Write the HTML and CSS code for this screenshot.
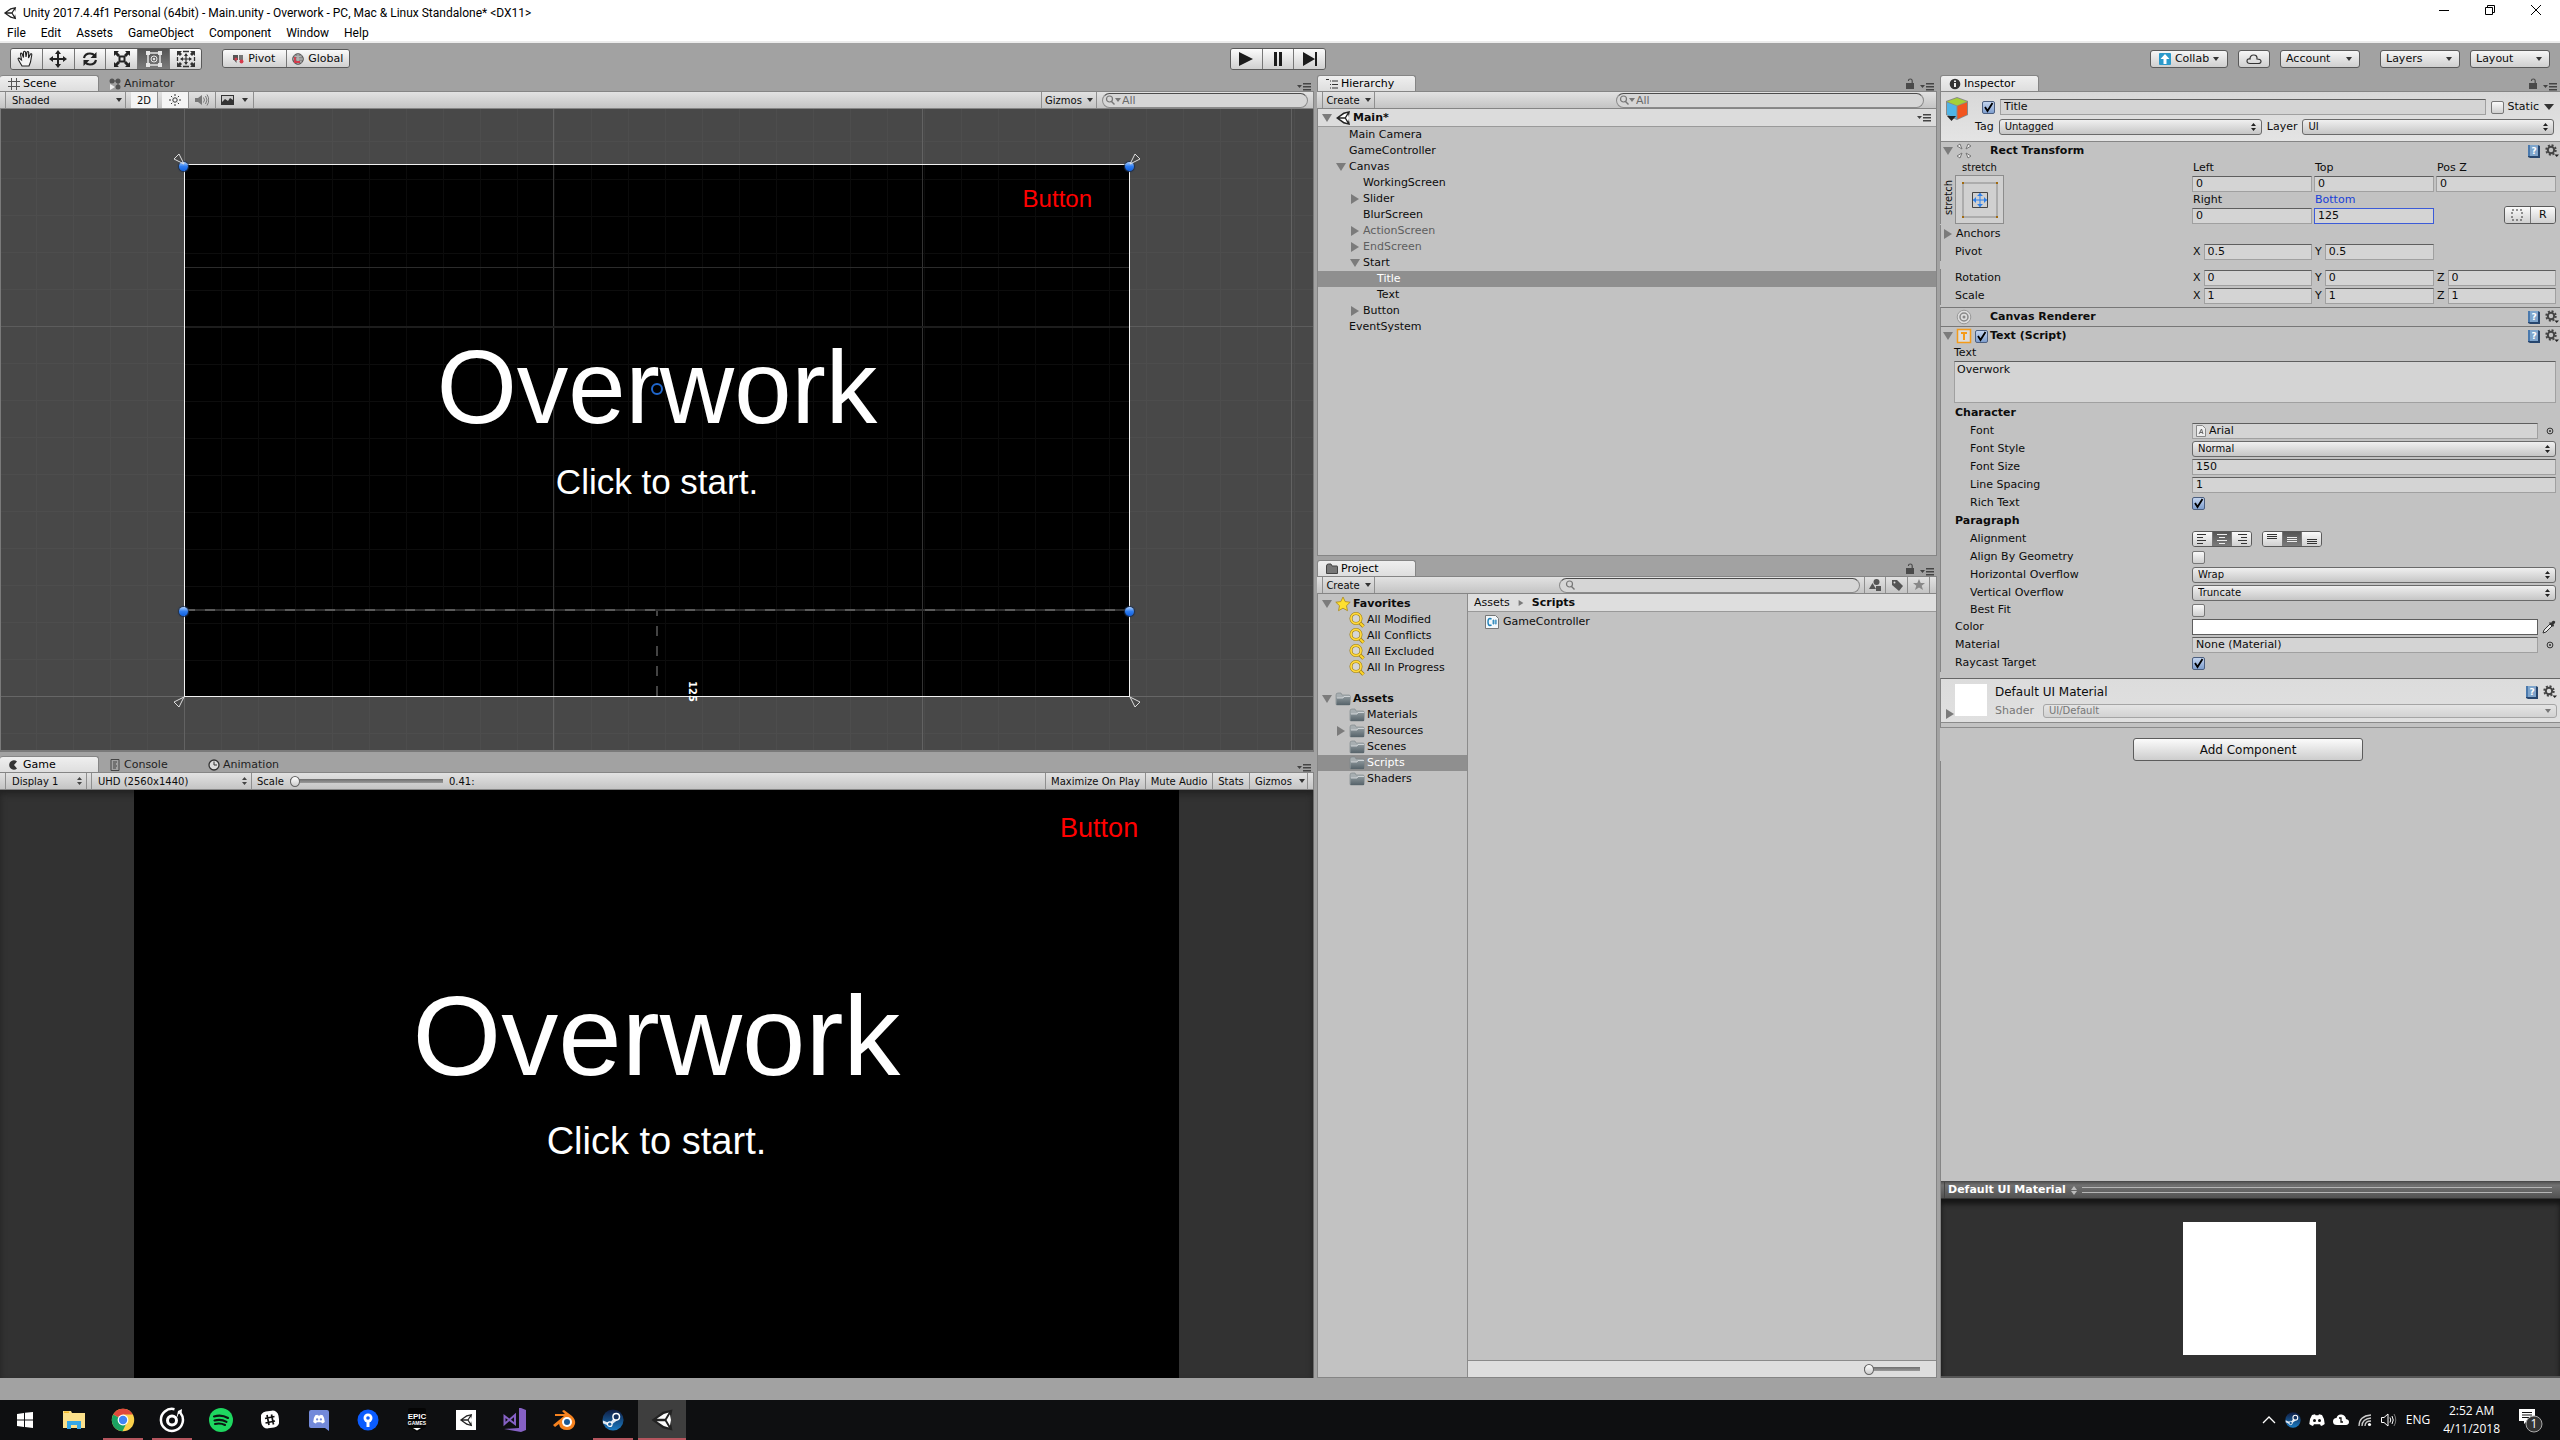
FILE: index.html
```
<!DOCTYPE html>
<html lang="en">
<head>
<meta charset="utf-8">
<title>Unity 2017.4.4f1 Personal (64bit) - Main.unity - Overwork</title>
<link rel="stylesheet" href="styles.css">
</head>
<body>
<svg class="defs" aria-hidden="true">
  <defs>
    <linearGradient id="g-folder" x1="0" y1="0" x2="0" y2="1"><stop offset="0" stop-color="#8d979b"/><stop offset="1" stop-color="#56636a"/></linearGradient>
    <linearGradient id="g-steam" x1="0" y1="0" x2="0" y2="1"><stop offset="0" stop-color="#0f1c42"/><stop offset="1" stop-color="#1b7cc4"/></linearGradient>
    <symbol id="unity" viewBox="0 0 16 16"><path d="M15 1 8.5 2.5 1 8l7.500 5.500L15 15l-1.500-7z" fill="#222"/><path d="m12.500 3-2.500 4.200h-5.500L9.200 4zM4.500 8.800H10l2.500 4.200-3.300-1zM13.300 4.200l.7 3.800-.7 3.800L11 8z" fill="#fff"/></symbol>
    <symbol id="down" viewBox="0 0 10 10"><path d="M0 1h10L5 9z" fill="#7b7b7b"/></symbol>
    <symbol id="right" viewBox="0 0 10 10"><path d="M1 0v10l8-5z" fill="#7b7b7b"/></symbol>
    <symbol id="folder" viewBox="0 0 16 14"><path d="M1 3q0-2 2-2h3l1 2h7q1 0 1 1v8q0 1-1 1H1.500L1 12z" fill="#a7aeb1" stroke="#7a8387" stroke-width=".6"/><path d="M1.500 6H8l1-1.500h6.500L15 13H1.500z" fill="url(#g-folder)"/><path d="M2 6h6l1-1.500h6" fill="none" stroke="#dce0e2" stroke-width=".8"/></symbol>
    <symbol id="find" viewBox="0 0 16 16"><path d="m10.500 10.500 4 4" stroke="#a07d10" stroke-width="3.500"/><path d="m10.500 10.500 4 4" stroke="#ffd62b" stroke-width="2"/><circle cx="7" cy="6.500" r="5" fill="#d6d6d6" stroke="#9a7c14" stroke-width="3"/><circle cx="7" cy="6.500" r="5" fill="none" stroke="#ffd83c" stroke-width="1.800"/></symbol>
    <symbol id="lock" viewBox="0 0 8 11"><path d="M0 5h8v6H0z" fill="#4a4a4a"/><path d="M2.500 3V2.500Q2.500 1 4.300 1T6.200 2.800V5" fill="none" stroke="#4a4a4a" stroke-width="1.200"/></symbol>
    <symbol id="opts" viewBox="0 0 14 8"><path d="M0 2h5L2.500 5zM6 0h8v1.500H6zM6 3h8v1.500H6zM6 6h8v1.500H6z" fill="#444"/></symbol>
    <symbol id="lens" viewBox="0 0 12 12"><circle cx="4.500" cy="5" r="3" fill="none" stroke="#777" stroke-width="1.200"/><path d="m6.500 7.500 3 3" stroke="#777" stroke-width="1.400"/></symbol>
    <symbol id="book" viewBox="0 0 14 14"><path d="M1 1h10l2 1v12H3l-2-1z" fill="#27466e"/><path d="M1 1h10v11H1z" fill="#4a79ad"/><path d="M3 1h8v11H3z" fill="#7fa5cc"/><text x="4.500" y="10" font-size="9" font-weight="bold" fill="#fff">?</text></symbol>
    <symbol id="gear" viewBox="0 0 14 14"><circle cx="6" cy="6" r="3.200" fill="none" stroke="#444" stroke-width="2"/><circle cx="6" cy="6" r="4.800" fill="none" stroke="#444" stroke-width="1.800" stroke-dasharray="2 1.770"/><path d="M9.500 10.500H14L11.700 13z" fill="#222"/></symbol>
    <symbol id="target" viewBox="0 0 8 8"><circle cx="4" cy="4" r="2.900" fill="none" stroke="#333"/><circle cx="4" cy="4" r="1" fill="#333"/></symbol>
    <symbol id="steam" viewBox="0 0 24 24"><circle cx="12" cy="12" r="11.500" fill="url(#g-steam)"/><path d="m1 12.500 7.500 3 4.500-6 4 2.500-6 4.500-3 2-7-3z" fill="#dfe8f2"/><circle cx="15.500" cy="8.500" r="3.600" fill="#14315e" stroke="#fff" stroke-width="1.600"/><circle cx="8.500" cy="16.500" r="2.500" fill="#1a5c9a" stroke="#fff" stroke-width="1.200"/></symbol>
    <symbol id="discord" viewBox="0 0 16 12"><path d="M3 1 6 .3l.6 1h2.800l.6-1L13 1q2.800 4 2.700 9-1.700 1.500-3.700 2l-1-1.700H5L4 12Q2 11.500.3 10 .2 5 3 1z" fill="#fff"/><circle cx="5.500" cy="6.500" r="1.500" fill="var(--eye)"/><circle cx="10.500" cy="6.500" r="1.500" fill="var(--eye)"/></symbol>
  </defs>
</svg>

<header class="titlebar">
  <svg class="i14" viewBox="0 0 16 16"><use href="#unity"/></svg>
  <span class="title">Unity 2017.4.4f1 Personal (64bit) - Main.unity - Overwork - PC, Mac &amp; Linux Standalone* &lt;DX11&gt;</span>
  <div class="winbtns">
    <button aria-label="Minimize"><svg width="12" height="12" viewBox="0 0 12 12"><path d="M1 6.500h10" stroke="#000"/></svg></button>
    <button aria-label="Restore"><svg width="12" height="12" viewBox="0 0 12 12"><path d="M1.500 3.500h7v7h-7zM3.500 3V1.500h7v7H9" stroke="#000" fill="none"/></svg></button>
    <button aria-label="Close"><svg width="12" height="12" viewBox="0 0 12 12"><path d="m1 1 10 10M11 1 1 11" stroke="#000"/></svg></button>
  </div>
</header>
<nav class="menubar">
  <button>File</button><button>Edit</button><button>Assets</button><button>GameObject</button><button>Component</button><button>Window</button><button>Help</button>
</nav>

<div class="toolbar">
  <div class="tb-left">
    <div class="seg tools">
      <button aria-label="Hand"><svg width="20" height="18" viewBox="0 0 20 18"><path d="M6 16 2.500 10q-1-2 .5-2l2.500 2-1-6q.2-1.500 1.500-.5l1.500 4L7.500 2Q8.500.5 9.500 2l.5 5 1-5q1-1.200 1.700.2L12.500 8l2-4q1.200-.8 1.300.8L14.500 12 13 16z" fill="#f4f4f4" stroke="#222" stroke-width="1.100"/></svg></button>
      <button aria-label="Move"><svg width="18" height="18" viewBox="0 0 18 18"><path d="m9 0 3 4h-2v4h4V6l4 3-4 3v-2h-4v4h2l-3 4-3-4h2v-4H4v2L0 9l4-3v2h4V4H6z" fill="#222"/></svg></button>
      <button aria-label="Rotate"><svg width="16" height="16" viewBox="0 0 16 16"><path d="M2 7q1-4.500 6-4.500 3 0 4.500 2M14 9q-1 4.500-6 4.500-3 0-4.500-2" stroke="#222" stroke-width="2.200" fill="none"/><path d="M14.500 1v6h-6zM1.500 15V9h6z" fill="#222"/></svg></button>
      <button aria-label="Scale"><svg width="18" height="18" viewBox="0 0 18 18"><path d="M6.500 6.500h5v5h-5z" fill="none" stroke="#222" stroke-width="2"/><path d="M1 1h5L4.500 2.500 7 5 5 7 2.500 4.500 1 6zM17 1v5l-1.500-1.500L13 7l-2-2 2.500-2.500L12 1zM1 17v-5l1.500 1.500L5 11l2 2-2.500 2.500L6 17zM17 17h-5l1.500-1.500L11 13l2-2 2.500 2.500L17 12z" fill="#222"/></svg></button>
      <button class="on" aria-label="Rect"><svg width="18" height="18" viewBox="0 0 18 18"><path d="M3 3h12v12H3z" fill="none" stroke="#e6e6e6" stroke-width="1.500"/><g fill="#e6e6e6"><path d="M1 1h4v4H1zM13 1h4v4h-4zM1 13h4v4H1zM13 13h4v4h-4z"/><circle cx="9" cy="9" r="1.200"/></g><circle cx="9" cy="9" r="3" fill="none" stroke="#e6e6e6"/></svg></button>
      <button aria-label="Transform"><svg width="20" height="18" viewBox="0 0 20 18"><path d="M1 6V1h5L4.500 2.500 6 4 4 6 2.500 4.500zM19 6V1h-5l1.500 1.500L14 4l2 2 1.500-1.500zM1 12v5h5l-1.500-1.500L6 14l-2-2-1.500 1.500zM19 12v5h-5l1.500-1.500L14 14l2-2 1.500 1.500z" fill="#333"/><path d="M7 1.500h6M7 16.500h6M1.500 7v4M18.500 7v4" stroke="#333" stroke-width="1.300"/><path d="M10 4v10M5 9h10" stroke="#333" stroke-width="1.200"/><path d="m10 3 2 3H8zm0 12 2-3H8zM4 9l3-2v4zm12 0-3-2v4z" fill="#333"/></svg></button>
    </div>
    <div class="seg pivot">
      <button><svg width="11" height="10" viewBox="0 0 11 10"><path d="M0 1h5v5H3.500v3L1 6H0z" fill="#555"/><path d="M6 1h4v5H6z" fill="#777"/><circle cx="3" cy="5" r="1.500" fill="#d43a4b"/><circle cx="8.500" cy="7.500" r="2" fill="#d43a4b"/></svg>Pivot</button>
      <button><svg width="12" height="12" viewBox="0 0 12 12"><circle cx="6" cy="6" r="5.300" fill="#8a8a8a" stroke="#555"/><path d="M6 1v10M1 6h10M2.500 3q3.500 2 7 0M2.500 9q3.500-2 7 0" stroke="#ccc" stroke-width=".7" fill="none"/><path d="M3 4v5h5" stroke="#d43a4b" stroke-width="1.800" fill="none"/></svg>Global</button>
    </div>
  </div>
  <div class="seg tools play">
    <button aria-label="Play"><svg width="16" height="16" viewBox="0 0 16 16"><path d="m1 1 14 7L1 15z" fill="#1c1c1c"/></svg></button>
    <button aria-label="Pause"><svg width="16" height="16" viewBox="0 0 16 16"><path d="M4 1h3v14H4zM9 1h3v14H9z" fill="#1c1c1c"/></svg></button>
    <button aria-label="Step"><svg width="16" height="16" viewBox="0 0 16 16"><path d="m1 1 12 7-12 7zM13 1h2v14h-2z" fill="#1c1c1c"/></svg></button>
  </div>
  <div class="tb-right">
    <button class="tbtn collab"><svg width="12" height="12" viewBox="0 0 12 12"><rect width="12" height="12" rx="1" fill="#2b9acb"/><path d="m6 1 4.500 5H7.500v5h-3V6h-3z" fill="#fff"/></svg>Collab<i class="car"></i></button>
    <button class="tbtn cloud" aria-label="Services"><svg width="16" height="12" viewBox="0 0 16 12"><path d="M4 10.500q-3 0-3-2.500T4 6q0-4 3.700-4T11 6q4 0 4 2.300t-3 2.200z" fill="none" stroke="#333" stroke-width="1.200"/></svg></button>
    <button class="tbtn wide">Account<i class="car"></i></button>
    <button class="tbtn wide far">Layers<i class="car"></i></button>
    <button class="tbtn wide">Layout<i class="car"></i></button>
  </div>
</div>

<main class="work">
  <div class="col left">
    <section class="panel">
      <div class="tabs">
        <button class="tab on"><svg width="12" height="12" viewBox="0 0 12 12"><path d="M3.500 0v12M8.500 0v12M0 3.500h12M0 8.500h12" stroke="#555"/></svg>Scene</button>
        <button class="tab"><svg width="12" height="12" viewBox="0 0 12 12"><circle cx="3" cy="3" r="2.500" fill="#555"/><circle cx="9" cy="3" r="2.500" fill="#555"/><circle cx="9" cy="9" r="2.500" fill="#555"/><path d="M3 3h6v6" stroke="#555" fill="none"/><path d="m1 6 5 3-5 3z" fill="#eee"/></svg>Animator</button>
        <svg class="opt" viewBox="0 0 14 8"><use href="#opts"/></svg>
      </div>
      <div class="bar">
        <button class="mb w-shaded">Shaded<i class="car"></i></button>
        <button class="mb lit w-2d">2D</button>
        <button class="mb lit w-ic" aria-label="Lighting"><svg width="12" height="12" viewBox="0 0 12 12"><circle cx="6" cy="6" r="2.200" fill="none" stroke="#333"/><path d="M6 0v2M6 10v2M0 6h2M10 6h2M2 2l1.200 1.200M8.800 8.800 10 10M10 2 8.800 3.200M3.200 8.800 2 10" stroke="#333"/></svg></button>
        <button class="mb w-ic flat" aria-label="Audio"><svg width="14" height="12" viewBox="0 0 14 12"><path d="M0 4h3l4-3v10L3 8H0z" fill="#777"/><path d="M8.500 3.500q2 2.500 0 5M10.500 2q3 4 0 8M12 .5q3.500 5.500 0 11" fill="none" stroke="#777"/></svg></button>
        <button class="mb w-fx" aria-label="Effects"><svg width="13" height="10" viewBox="0 0 13 10"><path d="M0 0h13v10H0z" fill="#333"/><path d="M1 1h11v4L9 3 7 6 4 4 1 7z" fill="#ccc"/></svg><i class="car"></i></button>
        <span class="grow"></span>
        <button class="mb w-giz">Gizmos<i class="car"></i></button>
        <label class="search s-scene"><svg viewBox="0 0 12 12"><use href="#lens"/></svg><i class="car"></i><input type="text" value="All" aria-label="Search scene"></label>
      </div>
      <div class="scene">
        <div class="grid"></div>
        <div class="stage">
          <span class="gl v1"></span><span class="gl v2"></span>
          <span class="guide"></span><span class="major"></span>
          <span class="t btn-label">Button</span>
          <span class="t headline">Overwork</span>
          <span class="t sub">Click to start.</span>
          <span class="dash-h"></span><span class="dash-v"></span>
          <span class="ring"></span>
          <i class="dot d1"></i><i class="dot d2"></i><i class="dot d3"></i><i class="dot d4"></i>
          <svg class="an a1" viewBox="0 0 12 12"><path d="M11 11 1 6l5-5z" fill="none" stroke="#ddd"/></svg>
          <svg class="an a2" viewBox="0 0 12 12"><path d="M1 11 11 6 6 1z" fill="none" stroke="#ddd"/></svg>
          <svg class="an a3" viewBox="0 0 12 12"><path d="M11 1 1 6l5 5z" fill="none" stroke="#ddd"/></svg>
          <svg class="an a4" viewBox="0 0 12 12"><path d="m1 1 10 5-5 5z" fill="none" stroke="#ddd"/></svg>
          <span class="dim">125</span>
        </div>
      </div>
    </section>
    <section class="panel">
      <div class="tabs">
        <button class="tab on"><svg width="12" height="12" viewBox="0 0 12 12"><path d="M9 2.500A4.700 4.700 0 1 0 9 9.500L6 6z" fill="#333"/></svg>Game</button>
        <button class="tab"><svg width="12" height="12" viewBox="0 0 12 12"><path d="M2 .5h8v11H2zM4 3h4M4 5h3M4 7h4M4 9h3" fill="none" stroke="#444"/></svg>Console</button>
        <button class="tab"><svg width="12" height="12" viewBox="0 0 12 12"><circle cx="6" cy="6" r="5" fill="#ddd" stroke="#333" stroke-width="1.300"/><path d="M6 2.500V6h3" fill="none" stroke="#333"/></svg>Animation</button>
        <svg class="opt" viewBox="0 0 14 8"><use href="#opts"/></svg>
      </div>
      <div class="bar">
        <select class="ms w-disp" aria-label="Display"><option>Display 1</option></select>
        <select class="ms w-uhd" aria-label="Aspect"><option>UHD (2560x1440)</option></select>
        <label class="scale">Scale<input class="range" type="range" min="0" max="100" value="0"></label>
        <span class="val">0.41:</span>
        <span class="grow"></span>
        <button class="mb m-max">Maximize On Play</button>
        <button class="mb m-mute">Mute Audio</button>
        <button class="mb m-stats">Stats</button>
        <button class="mb m-giz">Gizmos<i class="car"></i></button>
      </div>
      <div class="game">
        <div class="screen">
          <span class="t btn-label">Button</span>
          <span class="t headline">Overwork</span>
          <span class="t sub">Click to start.</span>
        </div>
      </div>
    </section>
  </div>

  <div class="col mid">
    <section class="panel">
      <div class="tabs">
        <button class="tab on"><svg width="12" height="12" viewBox="0 0 12 12"><path d="M0 1.500h3M4 3h1M6 3h6M4 6.500h1M6 6.500h6M4 10h1M6 10h6" stroke="#333" stroke-width="1.200"/></svg>Hierarchy</button>
        <svg class="lck" viewBox="0 0 8 11"><use href="#lock"/></svg>
        <svg class="opt" viewBox="0 0 14 8"><use href="#opts"/></svg>
      </div>
      <div class="bar">
        <button class="mb w-create">Create<i class="car"></i></button>
        <span class="grow"></span>
        <label class="search s-hier"><svg viewBox="0 0 12 12"><use href="#lens"/></svg><i class="car"></i><input type="text" value="All" aria-label="Search hierarchy"></label>
      </div>
      <div class="body">
        <div class="root"><span class="ar"><svg viewBox="0 0 10 10"><use href="#down"/></svg></span><svg class="i16" viewBox="0 0 16 16"><use href="#unity"/></svg><b>Main*</b><svg class="opt" viewBox="0 0 14 8"><use href="#opts"/></svg></div>
        <ul class="tree">
          <li class="l1"><span class="ar"></span>Main Camera</li>
          <li class="l1"><span class="ar"></span>GameController</li>
          <li class="l1"><span class="ar"><svg viewBox="0 0 10 10"><use href="#down"/></svg></span>Canvas</li>
          <li class="l2"><span class="ar"></span>WorkingScreen</li>
          <li class="l2"><span class="ar"><svg viewBox="0 0 10 10"><use href="#right"/></svg></span>Slider</li>
          <li class="l2"><span class="ar"></span>BlurScreen</li>
          <li class="l2 off"><span class="ar"><svg viewBox="0 0 10 10"><use href="#right"/></svg></span>ActionScreen</li>
          <li class="l2 off"><span class="ar"><svg viewBox="0 0 10 10"><use href="#right"/></svg></span>EndScreen</li>
          <li class="l2"><span class="ar"><svg viewBox="0 0 10 10"><use href="#down"/></svg></span>Start</li>
          <li class="l3 sel"><span class="ar"></span>Title</li>
          <li class="l3"><span class="ar"></span>Text</li>
          <li class="l2"><span class="ar"><svg viewBox="0 0 10 10"><use href="#right"/></svg></span>Button</li>
          <li class="l1"><span class="ar"></span>EventSystem</li>
        </ul>
      </div>
    </section>
    <section class="panel">
      <div class="tabs">
        <button class="tab on"><svg width="12" height="12" viewBox="0 0 12 12"><path d="M.5 3q0-2 2-2H5l1 2h5q.5 0 .5.500V10.500H.5z" fill="#777" stroke="#444"/></svg>Project</button>
        <svg class="lck" viewBox="0 0 8 11"><use href="#lock"/></svg>
        <svg class="opt" viewBox="0 0 14 8"><use href="#opts"/></svg>
      </div>
      <div class="bar">
        <button class="mb w-create">Create<i class="car"></i></button>
        <span class="grow"></span>
        <label class="search s-proj"><svg viewBox="0 0 12 12"><use href="#lens"/></svg><input type="text" value="" aria-label="Search project"></label>
        <button class="mb w-p" aria-label="Filter by type"><svg width="12" height="12" viewBox="0 0 12 12"><circle cx="7.500" cy="3" r="3" fill="#555"/><path d="M0 10 3.500 4 7 10zM7 7h5v5H7z" fill="#555"/></svg></button>
        <button class="mb w-p" aria-label="Filter by label"><svg width="12" height="12" viewBox="0 0 12 12"><path d="M1 1h5l6 6-4 5L1 6z" fill="#555"/><circle cx="3.500" cy="3.500" r="1" fill="#ddd"/></svg></button>
        <button class="mb w-p" aria-label="Save search"><svg width="12" height="12" viewBox="0 0 12 12"><path d="m6 0 1.700 4H12L8.700 6.700 10 11 6 8.500 2 11l1.300-4.300L0 4h4.300z" fill="#888"/></svg></button>
        <span class="tail"></span>
      </div>
      <div class="proj">
        <ul class="tree side">
          <li class="l0"><span class="ar"><svg viewBox="0 0 10 10"><use href="#down"/></svg></span><svg class="i16" viewBox="0 0 16 16"><path d="m8 1 2.200 4.600 5 .6-3.700 3.500 1 5L8 12.200l-4.500 2.500 1-5L.8 6.200l5-.6z" fill="#ffe02e" stroke="#a8861a" stroke-width=".8"/></svg><b>Favorites</b></li>
          <li class="l1"><span class="ar"></span><svg class="i16" viewBox="0 0 16 16"><use href="#find"/></svg>All Modified</li>
          <li class="l1"><span class="ar"></span><svg class="i16" viewBox="0 0 16 16"><use href="#find"/></svg>All Conflicts</li>
          <li class="l1"><span class="ar"></span><svg class="i16" viewBox="0 0 16 16"><use href="#find"/></svg>All Excluded</li>
          <li class="l1 last"><span class="ar"></span><svg class="i16" viewBox="0 0 16 16"><use href="#find"/></svg>All In Progress</li>
          <li class="l0"><span class="ar"><svg viewBox="0 0 10 10"><use href="#down"/></svg></span><svg class="i16" viewBox="0 0 16 14"><use href="#folder"/></svg><b>Assets</b></li>
          <li class="l1"><span class="ar"></span><svg class="i16" viewBox="0 0 16 14"><use href="#folder"/></svg>Materials</li>
          <li class="l1"><span class="ar"><svg viewBox="0 0 10 10"><use href="#right"/></svg></span><svg class="i16" viewBox="0 0 16 14"><use href="#folder"/></svg>Resources</li>
          <li class="l1"><span class="ar"></span><svg class="i16" viewBox="0 0 16 14"><use href="#folder"/></svg>Scenes</li>
          <li class="l1 sel"><span class="ar"></span><svg class="i16" viewBox="0 0 16 14"><use href="#folder"/></svg>Scripts</li>
          <li class="l1"><span class="ar"></span><svg class="i16" viewBox="0 0 16 14"><use href="#folder"/></svg>Shaders</li>
        </ul>
        <div class="files">
          <div class="crumbs"><span>Assets</span><svg width="6" height="6" viewBox="0 0 10 10"><use href="#right"/></svg><b>Scripts</b></div>
          <div class="file"><svg width="14" height="14" viewBox="0 0 14 14"><path d="M.5.500h10l3 3v10H.5z" fill="#f3f8fb" stroke="#777"/><path d="M6.500 4.200Q5.800 3.500 5 3.500 3 3.500 3 7t2 3.500q.8 0 1.500-.7" fill="none" stroke="#2080b8" stroke-width="1.400"/><path d="M8.500 4.500v5M10.800 4.500v5M7 6h5M7 8h5" stroke="#2080b8" stroke-width=".8"/></svg>GameController</div>
          <div class="zoombar"><input class="range" type="range" min="0" max="100" value="0" aria-label="Icon size"></div>
        </div>
      </div>
    </section>
  </div>

  <section class="panel insp">
    <div class="tabs">
      <button class="tab on"><svg width="12" height="12" viewBox="0 0 12 12"><circle cx="6" cy="6" r="5.300" fill="#333"/><path d="M5 5h2v4H5zM5 2.500h2V4H5z" fill="#eee"/></svg>Inspector</button>
      <svg class="lck" viewBox="0 0 8 11"><use href="#lock"/></svg>
      <svg class="opt" viewBox="0 0 14 8"><use href="#opts"/></svg>
    </div>
    <div class="objhead">
      <svg class="cube" viewBox="0 0 24 24"><path d="M12 0 23 4v14l-11 5L1 18V4z" fill="#888"/><path d="m12 1 10 3.500-10 4L2 4.500z" fill="#a5d037"/><path d="M2 5.500 11.500 9v13L2 17.500z" fill="#4fb4e6"/><path d="M22 5.500 12.500 9v13l9.500-4.500z" fill="#f2551f"/><path d="M2 19h9l-4.500 5z" fill="#222"/></svg>
      <div class="objrows">
        <div class="r1"><input type="checkbox" checked aria-label="Active"><input class="f name" type="text" value="Title" aria-label="Name"><label class="static"><input type="checkbox">Static</label><i class="car big"></i></div>
        <div class="r2"><label for="tag">Tag</label><select id="tag" class="s tag"><option>Untagged</option></select><label for="layer">Layer</label><select id="layer" class="s"><option>UI</option></select></div>
      </div>
    </div>

    <div class="chead"><span class="ar"><svg viewBox="0 0 10 10"><use href="#down"/></svg></span><svg class="i16" viewBox="0 0 16 16"><path d="m1 3 3-2 2 5zM15 3l-3-2-2 5zM1 13l3 2 2-5zM15 13l-3 2-2-5z" fill="#eee" stroke="#777"/></svg><b>Rect Transform</b><svg class="i14" viewBox="0 0 14 14"><use href="#book"/></svg><svg class="i14" viewBox="0 0 14 14"><use href="#gear"/></svg></div>
    <div class="rect">
      <div class="preset">
        <span class="ph">stretch</span><span class="pv">stretch</span>
        <button aria-label="Anchor presets"><svg width="46" height="46" viewBox="0 0 46 46"><path d="M6 6h34v34H6z" fill="none" stroke="#888"/><path d="M15.500 15.500h15v15h-15z" fill="none" stroke="#444"/><path d="M23 16v14M16 23h14" stroke="#2f80e8"/><path d="m23 16 3 3h-6zM23 30l3-3h-6zM16 23l3-3v6zM30 23l-3-3v6z" fill="#2f80e8"/><path d="M5 5h2v2H5zM39 5h2v2h-2zM5 39h2v2H5zM39 39h2v2h-2z" fill="#a06a10"/></svg></button>
      </div>
      <div class="quad">
        <label for="p1">Left</label><label for="p2">Top</label><label for="p3">Pos Z</label>
        <input id="p1" class="f" value="0"><input id="p2" class="f" value="0"><input id="p3" class="f" value="0">
        <label for="p4">Right</label><label for="p5" class="act">Bottom</label><span></span>
        <input id="p4" class="f" value="0"><input id="p5" class="f focus" value="125">
        <div class="seg rr"><button aria-label="Blueprint mode"><svg width="12" height="12" viewBox="0 0 12 12"><path d="M1 1h10v10H1z" fill="none" stroke="#333" stroke-dasharray="2 2"/></svg></button><button>R</button></div>
      </div>
    </div>
    <div class="row out"><span class="ar"><svg viewBox="0 0 10 10"><use href="#right"/></svg></span><span>Anchors</span></div>
    <div class="row pv-row"><span class="lb">Pivot</span><div class="xyz"><label>X<input class="f" value="0.5"></label><label>Y<input class="f" value="0.5"></label></div></div>
    <div class="row"><span class="lb">Rotation</span><div class="xyz"><label>X<input class="f" value="0"></label><label>Y<input class="f" value="0"></label><label>Z<input class="f" value="0"></label></div></div>
    <div class="row sc-row"><span class="lb">Scale</span><div class="xyz"><label>X<input class="f" value="1"></label><label>Y<input class="f" value="1"></label><label>Z<input class="f" value="1"></label></div></div>

    <div class="chead line"><span class="ar"></span><svg class="i16" viewBox="0 0 16 16"><circle cx="8" cy="8" r="6.800" fill="#ddd" stroke="#999"/><circle cx="8" cy="8" r="4" fill="none" stroke="#888" stroke-width="1.500"/><circle cx="8" cy="8" r="1.500" fill="#888"/></svg><b>Canvas Renderer</b><svg class="i14" viewBox="0 0 14 14"><use href="#book"/></svg><svg class="i14" viewBox="0 0 14 14"><use href="#gear"/></svg></div>
    <div class="chead line"><span class="ar"><svg viewBox="0 0 10 10"><use href="#down"/></svg></span><svg class="i16" viewBox="0 0 16 16"><path d="M1.500 1.500h13v13h-13z" fill="#ddd" stroke="#f49b1a" stroke-width="1.500"/><path d="M5 4h6v2H9v6H7V6H5z" fill="#f49b1a"/></svg><input type="checkbox" checked aria-label="Text enabled"><b>Text (Script)</b><svg class="i14" viewBox="0 0 14 14"><use href="#book"/></svg><svg class="i14" viewBox="0 0 14 14"><use href="#gear"/></svg></div>
    <div class="textblk"><label for="txt">Text</label><textarea id="txt" class="f">Overwork</textarea></div>
    <div class="row"><b>Character</b></div>
    <div class="row in"><label class="lb" for="c1">Font</label><span class="f obj"><svg width="10" height="12" viewBox="0 0 10 12"><path d="M.5.500h6l3 3v8h-9z" fill="#eee" stroke="#888"/><path d="m3 9 2.500-5L7 9M4 7.500h3" stroke="#666" fill="none"/></svg><input id="c1" value="Arial"></span><svg class="pick" viewBox="0 0 8 8"><use href="#target"/></svg></div>
    <div class="row in"><label class="lb" for="c2">Font Style</label><select id="c2" class="s"><option>Normal</option></select></div>
    <div class="row in"><label class="lb" for="c3">Font Size</label><input id="c3" class="f" value="150"></div>
    <div class="row in"><label class="lb" for="c4">Line Spacing</label><input id="c4" class="f" value="1"></div>
    <div class="row in"><label class="lb" for="c5">Rich Text</label><input id="c5" type="checkbox" checked></div>
    <div class="row"><b>Paragraph</b></div>
    <div class="row in"><span class="lb">Alignment</span>
      <div class="seg al"><button aria-label="Left"><svg width="10" height="10" viewBox="0 0 10 10"><path d="M0 .5h9M0 3.500h6M0 6.500h9M0 9.500h6" stroke="#333"/></svg></button><button class="on" aria-label="Center"><svg width="10" height="10" viewBox="0 0 10 10"><path d="M0 .5h10M2 3.500h6M0 6.500h10M2 9.500h6" stroke="#eee"/></svg></button><button aria-label="Right"><svg width="10" height="10" viewBox="0 0 10 10"><path d="M1 .5h9M4 3.500h6M1 6.500h9M4 9.500h6" stroke="#333"/></svg></button></div>
      <div class="seg al"><button aria-label="Top"><svg width="10" height="10" viewBox="0 0 10 10"><path d="M0 .5h10M0 2.500h10M0 4.500h10" stroke="#333"/></svg></button><button class="on" aria-label="Middle"><svg width="10" height="10" viewBox="0 0 10 10"><path d="M0 3.500h10M0 5.500h10M0 7.500h10" stroke="#eee"/></svg></button><button aria-label="Bottom"><svg width="10" height="10" viewBox="0 0 10 10"><path d="M0 5.500h10M0 7.500h10M0 9.500h10" stroke="#333"/></svg></button></div>
    </div>
    <div class="row in"><label class="lb" for="c6">Align By Geometry</label><input id="c6" type="checkbox"></div>
    <div class="row in"><label class="lb" for="c7">Horizontal Overflow</label><select id="c7" class="s"><option>Wrap</option></select></div>
    <div class="row in"><label class="lb" for="c8">Vertical Overflow</label><select id="c8" class="s"><option>Truncate</option></select></div>
    <div class="row in short"><label class="lb" for="c9">Best Fit</label><input id="c9" type="checkbox"></div>
    <div class="row"><span class="lb">Color</span><button class="swatch" aria-label="Color"></button><svg class="drop" viewBox="0 0 14 14"><path d="m1 13 1-3 6-6 2 2-6 6z" fill="#eee" stroke="#333"/><path d="m7 3 4 4 1-1.500-.5-1L13 3q.8-1.500-.5-2T10 1.500L9 3 8 2z" fill="#333"/></svg></div>
    <div class="row"><label class="lb" for="c10">Material</label><span class="f obj"><input id="c10" value="None (Material)"></span><svg class="pick" viewBox="0 0 8 8"><use href="#target"/></svg></div>
    <div class="row ray"><label class="lb" for="c11">Raycast Target</label><input id="c11" type="checkbox" checked></div>

    <div class="mat">
      <svg class="mar" viewBox="0 0 10 10"><use href="#right"/></svg>
      <span class="thumb"></span>
      <div class="minfo">
        <div class="m1"><span>Default UI Material</span><svg class="i14" viewBox="0 0 14 14"><use href="#book"/></svg><svg class="i14" viewBox="0 0 14 14"><use href="#gear"/></svg></div>
        <div class="m2"><label for="shader">Shader</label><select id="shader" class="s dim-s" disabled><option>UI/Default</option></select></div>
      </div>
    </div>
    <div class="strip"></div>
    <button class="add">Add Component</button>
    <div class="fill"></div>
    <div class="preview">
      <div class="phead"><b>Default UI Material</b><svg width="6" height="9" viewBox="0 0 6 9"><path d="M0 4h6L3 0zM0 5h6L3 9z" fill="#bbb"/></svg><span class="grip"></span></div>
      <div class="pbody"><span class="white"></span></div>
    </div>
  </section>
</main>
<div class="status"></div>

<footer class="task">
  <button aria-label="Start"><svg width="18" height="18" viewBox="0 0 18 18"><path d="m1 3 7-1v6.500H1zM9 1.800 17 1v7.500H9zM1 9.500h7V16l-7-1zM9 9.500h8V17l-8-1z" fill="#fff"/></svg></button>
  <button aria-label="Explorer"><svg width="24" height="20" viewBox="0 0 24 20"><path d="M1 1h8l1 2h13v15H1z" fill="#fbe08b"/><path d="M2 1.500h5v1.500H2z" fill="#f3b929"/><path d="M5 11h14v8h-4v-4H9v4H5z" fill="#35a7e8"/></svg></button>
  <button class="run" aria-label="Chrome"><svg width="24" height="24" viewBox="0 0 24 24"><circle cx="12" cy="12" r="11.200" fill="#fbd14b"/><path d="M12 12 2.300 6.400A11.200 11.200 0 0 1 21.700 6.400H12z" fill="#e0493c"/><path d="M12 12 2.300 6.400A11.200 11.200 0 0 0 11.500 23.200L16 14z" fill="#1ba261"/><circle cx="12" cy="12" r="5.400" fill="#fff"/><circle cx="12" cy="12" r="4.200" fill="#4285f4"/></svg></button>
  <button class="run" aria-label="Groove"><svg width="26" height="26" viewBox="0 0 26 26"><path d="M21.500 6a11 11 0 1 1-6-3.800" fill="none" stroke="#fff" stroke-width="2.500"/><circle cx="13" cy="13.500" r="4.500" fill="none" stroke="#fff" stroke-width="3"/><path d="M17 13 19 4l4-2-.5 4.500-3 .5z" fill="#fff"/></svg></button>
  <button aria-label="Spotify"><svg width="24" height="24" viewBox="0 0 24 24"><circle cx="12" cy="12" r="12" fill="#1ed760"/><path d="M5 8.500q7.500-2.300 14 1.500M5.500 12.500q6.500-1.800 12 1.300M6 16q5.500-1.300 10 1" fill="none" stroke="#0c1512" stroke-width="2.100" stroke-linecap="round"/></svg></button>
  <button aria-label="Slack"><svg width="18" height="20" viewBox="0 0 18 20"><rect y="1" width="18" height="17" rx="6" fill="#fff" transform="rotate(-8 9 10)"/><path d="m6 5 2 10M10.500 4.500l2 10M4 8.500l9.500-2M4.500 13l9.500-2" stroke="#111" stroke-width="1.700"/></svg></button>
  <button class="dc" aria-label="Discord"><svg width="22" height="22" viewBox="0 0 22 22"><path d="M3 1h16q2 0 2 2v19l-4-3H3q-2 0-2-2V3q0-2 2-2z" fill="#7289da"/><use href="#discord" x="5" y="5" width="12" height="10"/></svg></button>
  <button aria-label="Maps"><svg width="22" height="22" viewBox="0 0 22 22"><circle cx="11" cy="11" r="10.500" fill="#0a5cff"/><circle cx="11" cy="9" r="4.500" fill="#fff"/><path d="M9.500 12h3v6h-3z" fill="#fff"/><circle cx="11" cy="9" r="1.800" fill="#0a5cff"/></svg></button>
  <button aria-label="Epic Games"><svg width="20" height="24" viewBox="0 0 20 24"><path d="M1 2q0-2 2-2h14q2 0 2 2v17l-9 5-9-5z" fill="#050505"/><path d="M6 20h8l-4 2.500z" fill="#fff"/><text x="10" y="11" text-anchor="middle" class="epic">EPIC</text><text x="10" y="17" text-anchor="middle" class="epic small">GAMES</text></svg></button>
  <button aria-label="Unity Hub"><svg width="20" height="20" viewBox="0 0 20 20"><path d="M0 0h20v20H0z" fill="#fff"/><use href="#unity" x="3" y="3" width="14" height="14"/></svg></button>
  <button aria-label="Visual Studio"><svg width="24" height="24" viewBox="0 0 24 24"><path d="m18 0 5 2v20l-5 2L1 21l15-1V0z" fill="#8661c5"/><path d="M1.500 8v8L12 7v9z" fill="none" stroke="#8661c5" stroke-width="2"/></svg></button>
  <button aria-label="Blender"><svg width="24" height="22" viewBox="0 0 24 22"><path d="M1 16 12 7H3V5h10L10 2l2-1 8 6q4 4 3 8-2 6-8 6-7 0-8-6l-4 3z" fill="#f5821f"/><circle cx="15" cy="13" r="5" fill="#fff"/><circle cx="15" cy="13" r="3" fill="#1c5a96"/></svg></button>
  <button class="run" aria-label="Steam"><svg width="22" height="22" viewBox="0 0 24 24"><use href="#steam"/></svg></button>
  <button class="run cur" aria-label="Unity"><svg width="24" height="24" viewBox="0 0 16 16"><use href="#unity"/></svg></button>
  <span class="grow"></span>
  <div class="tray">
    <svg viewBox="0 0 16 16"><path d="m2 11 6-6 6 6" fill="none" stroke="#fff" stroke-width="1.300"/></svg>
    <svg viewBox="0 0 24 24"><use href="#steam"/></svg>
    <svg viewBox="0 0 16 16"><use href="#discord" y="2" width="16" height="12"/></svg>
    <svg viewBox="0 0 16 16"><path d="M4 13q-4 0-4-3.500T3.500 6Q4.500 2 8.500 2.500T13 7q3 .5 3 3t-3 3z" fill="#fff"/><path d="M6 6h2v2M10 10H8V8" fill="none" stroke="#111" stroke-width="1.300"/></svg>
    <svg viewBox="0 0 16 16"><path d="M2 14Q2 4 14 3M5 14q0-7 9-8M8 14q0-5 6-5" fill="none" stroke="#ccc" stroke-width="1.300"/><circle cx="12.500" cy="12.500" r="1.600" fill="#fff"/></svg>
    <svg viewBox="0 0 16 16"><path d="M.5 5.500H3l4-3.500v12L3 10.500H.5z" fill="none" stroke="#fff"/><path d="M9 5.500q1.500 2.500 0 5M11 4q2.500 4 0 8" fill="none" stroke="#fff"/><path d="M13 2q3.500 6 0 12" fill="none" stroke="#777"/></svg>
  </div>
  <span class="lang">ENG</span>
  <div class="clock"><span>2:52 AM</span><span>4/11/2018</span></div>
  <svg class="note" width="26" height="26" viewBox="0 0 26 26"><path d="M1 2h16v12H9l-3 3v-3H1z" fill="#fff"/><path d="M4 5.500h10M4 8h10M4 10.500h7" stroke="#111"/><circle cx="16" cy="17" r="8" fill="#333" stroke="#aaa"/><text x="16" y="21" font-size="12" text-anchor="middle" fill="#fff">1</text></svg>
</footer>
</body>
</html>
```
FILE: styles.css
```
* { box-sizing: border-box; }
body {
  margin: 0;
  height: 100vh;
  display: flex;
  flex-direction: column;
  background: #a2a2a2;
  color: #0c0c0c;
  font: 11px/16px "DejaVu Sans", Verdana, sans-serif;
  overflow: hidden;
}
button, input, select, textarea { font: inherit; color: inherit; margin: 0; padding: 0; border: 0; background: none; border-radius: 0; outline: 0; }
button { display: flex; align-items: center; justify-content: center; white-space: nowrap; }
svg { display: block; flex: none; }
.defs { position: absolute; width: 0; height: 0; }
.grow { flex: 1; }
.i14 { width: 14px; height: 14px; }
.i16 { width: 16px; height: 16px; }

/* title and menus */
.titlebar { flex: none; height: 25px; padding-left: 3px; display: flex; align-items: center; gap: 6px; background: #fff; font: 12px/16px Roboto, "Noto Sans", sans-serif; color: #000; }
.title { flex: 1; }
.winbtns { display: flex; align-self: flex-start; }
.winbtns button { width: 46px; height: 20px; }
.winbtns button:last-child { margin-right: 1px; }
.menubar { flex: none; display: flex; height: 18px; padding: 0 7px; gap: 15px; background: #fff; border-bottom: 2px solid #ececec; font: 12px/16px Roboto, "Noto Sans", sans-serif; color: #000; }

/* main toolbar */
.toolbar { flex: none; height: 32px; padding: 0 10px 1px; display: grid; grid-template-columns: 1fr auto 1fr; align-items: center; }
.tb-left { display: flex; align-items: center; gap: 20px; }
.tb-right { display: flex; align-items: center; justify-content: flex-end; gap: 10px; }
.seg { display: flex; border: 1px solid #5a5a5a; border-radius: 3px; overflow: hidden; }
.seg button { flex: 1; min-width: 0; background: linear-gradient(#fbfbfb, #d0d0d0); border-left: 1px solid #777; }
.seg button:first-child { border-left: 0; }
.seg button.on { background: linear-gradient(#555, #7b7b7b); }
.tools { width: 192px; }
.tools button { height: 20px; }
.play { width: 96px; margin-right: 4px; }
.pivot { width: 128px; }
.pivot button { height: 17px; gap: 4px; }
.tbtn { height: 18px; padding: 0 7px; gap: 4px; border: 1px solid #5a5a5a; border-radius: 3px; background: linear-gradient(#f6f6f6, #cfcfcf); }
.tbtn.wide { width: 80px; justify-content: space-between; padding-left: 5px; }
.tbtn.far { margin-left: 10px; }
.collab { width: 78px; }
.cloud { width: 32px; }
.car { width: 0; height: 0; border: 3px solid transparent; border-top: 4px solid #333; border-bottom: 0; flex: none; }
.car.big { border-width: 5px; border-top-width: 6px; border-bottom-width: 0; }

/* docked panels */
.work { flex: 1; min-height: 0; display: grid; grid-template-columns: minmax(0, 1314fr) minmax(0, 620fr) minmax(0, 620fr); gap: 3px; }
.col { display: grid; gap: 4px; min-height: 0; }
.left { grid-template-rows: minmax(0, 677fr) minmax(0, 622fr); }
.mid { grid-template-rows: minmax(0, 481fr) minmax(0, 818fr); }
.panel { display: flex; flex-direction: column; min-width: 0; min-height: 0; }
.tabs { flex: none; height: 16px; display: flex; align-items: center; }
.tab { width: 99px; height: 16px; padding: 1px 0 0 10px; gap: 3px; justify-content: flex-start; color: #222; }
.tab.on { padding-left: 8px; border: 1px solid #858585; border-bottom: 0; border-radius: 3px 3px 0 0; background: linear-gradient(#efefef, #dedede); color: #000; }
.left .tab.on { border-left: 0; }
.opt { width: 14px; height: 8px; margin: 7px 3px 0 6px; }
.tabs > .tab:last-of-type { margin-right: auto; }
.lck { width: 8px; height: 11px; }
.bar { flex: none; height: 18px; display: flex; align-items: stretch; padding-left: 5px; border: solid #858585; border-width: 1px 1px 1px 0; background: linear-gradient(#e2e2e2, #c4c4c4); font-size: 10px; line-height: 15px; }
.mb { border: solid #8f8f8f; border-width: 0 1px; padding: 0 6px; gap: 5px; }
.mb + .mb { border-left: 0; }
.mb.lit { background: #f4f4f4; }
.w-shaded { width: 121px; justify-content: space-between; margin-right: 5px; padding-right: 3px; }
.w-2d { width: 27px; margin-right: 4px; }
.w-ic { width: 27px; }
.w-fx { width: 38px; gap: 8px; }
.w-giz { width: 56px; margin-right: 5px; padding: 0 4px; }
.w-create { width: 53px; padding: 0 4px; }
.search { align-self: center; height: 15px; display: flex; align-items: center; border: 1px solid #8a8a8a; border-top-color: #4c4c4c; border-radius: 8px; background: #d6d6d6; padding-left: 2px; color: #6b6b6b; font-size: 11px; }
.search svg { width: 12px; height: 12px; }
.search .car { border-top-color: #777; margin-left: -2px; }
.search input { flex: 1; min-width: 0; height: 13px; padding-left: 1px; }
.s-scene { width: 206px; margin-right: 5px; }
.s-hier { width: 308px; margin-right: 12px; }
.s-proj { width: 301px; padding-left: 5px; margin-right: 4px; }
.w-p { width: 22px; padding: 0; }
.tail { width: 6px; }

/* game toolbar */
.ms { appearance: none; border: solid #8f8f8f; border-width: 0 1px; padding: 0 6px; background: url("data:image/svg+xml,%3Csvg xmlns='http://www.w3.org/2000/svg' width='6' height='8'%3E%3Cpath d='M0 3h5L2.500 0zM0 5h5L2.500 8z' fill='%23444'/%3E%3C/svg%3E") no-repeat right 3px center; }
.w-disp { width: 82px; margin-right: 4px; }
.w-uhd { width: 161px; }
.scale { display: flex; align-items: center; gap: 6px; padding: 0 6px 0 5px; }
.range { appearance: none; width: 153px; height: 12px; background: linear-gradient(transparent 4px, #6e6e6e 4px, #9a9a9a 8px, transparent 8px); }
.range::-webkit-slider-thumb { appearance: none; width: 10px; height: 11px; border: 1px solid #666; border-radius: 50%; background: linear-gradient(#fff, #ccc); }
.val { padding-top: 1px; }
.m-max { width: 101px; border-left-width: 1px; padding: 0; }
.m-mute { width: 67px; padding: 0; }
.m-stats { width: 37px; padding: 0; }
.m-giz { width: 58px; padding: 0 3px 0 6px; gap: 7px; margin-right: 5px; }

/* scene canvas */
.scene { flex: 1; position: relative; overflow: hidden; background: #484848; border: solid #7a7a7a; border-width: 0 1px 2px 1px; }
.grid { position: absolute; inset: 0; background:
  repeating-linear-gradient(90deg, transparent 0 183px, #626262 183px 184px, transparent 184px 369px) 0 0 / 369px 100%,
  linear-gradient(#666, #666) 0 587px / 100% 1px no-repeat,
  linear-gradient(#5c5c5c, #5c5c5c) 0 217px / 100% 1px no-repeat,
  linear-gradient(90deg, #4d4d4d 1px, transparent 1px) 35px 0 / 37px 100%,
  linear-gradient(#4d4d4d 1px, transparent 1px) 0 32px / 100% 37px; }
.stage { position: absolute; left: 183px; top: 55px; width: 946px; height: 533px; border: 1px solid #f2f2f2; background-color: #000; background-image: linear-gradient(90deg, #0b0b0b 1px, transparent 1px), linear-gradient(#0d0d0d 1px, transparent 1px); background-size: 37px 100%, 100% 37px; background-position: 36px 0, 0 14px; }
.t { position: absolute; font-family: "Liberation Sans", Arial, sans-serif; line-height: 1; color: #fff; white-space: nowrap; }
.headline { left: 50%; top: 171px; transform: translateX(-50%); font-size: 103px; }
.sub { left: 50%; top: 299px; transform: translateX(-50%); font-size: 35px; }
.btn-label { right: 37px; top: 22px; font-size: 24px; color: #f00; }
.gl { position: absolute; top: 0; bottom: 0; width: 1px; background: #333; }
.v1 { left: 368px; }
.v2 { left: 737px; }
.guide, .major { position: absolute; left: 0; right: 0; top: 102px; height: 1px; background: #2c2c2c; }
.major { top: 161px; height: 2px; background: #1d1d1d; }
.dash-h { position: absolute; left: 0; right: 0; top: 444px; height: 2px; background: repeating-linear-gradient(90deg, #5a5a5a 0 10px, #2f2f2f 10px 20px); }
.dash-v { position: absolute; left: 471px; top: 446px; bottom: 0; width: 2px; background: repeating-linear-gradient(#444 0 5px, transparent 5px 15px, #444 15px 20px); }
.ring { position: absolute; left: 466px; top: 218px; width: 12px; height: 12px; border: 2px solid #1f66cc; border-radius: 50%; }
.dot { position: absolute; width: 9px; height: 9px; border-radius: 50%; background: linear-gradient(#a8cdff, #2f7df0 50%, #0f5fe0); box-shadow: 0 0 1px 1px #1c3050; }
.d1 { left: -6px; top: -3px; } .d2 { right: -5px; top: -3px; } .d3 { left: -6px; top: 442px; } .d4 { right: -5px; top: 442px; }
.an { position: absolute; width: 12px; height: 12px; }
.a1 { left: -12px; top: -12px; } .a2 { right: -12px; top: -12px; } .a3 { left: -12px; bottom: -12px; } .a4 { right: -12px; bottom: -12px; }
.dim { position: absolute; left: 502px; top: 516px; height: 24px; width: 10px; writing-mode: vertical-rl; font: bold 10px/10px "DejaVu Sans", sans-serif; color: #fff; }

/* game view */
.game { flex: 1; min-height: 0; display: flex; justify-content: center; background: #323232; border-right: 1px solid #6a6a6a; box-shadow: inset 0 4px 6px #222; }
.screen { position: relative; height: 100%; aspect-ratio: 16 / 9; background: #000; }
.screen .headline { top: 189px; font-size: 114px; }
.screen .sub { top: 332px; font-size: 38px; }
.screen .btn-label { right: 41px; top: 25px; font-size: 27px; }

/* lists */
.body { flex: 1; background: #c2c2c2; border: 1px solid #858585; border-top: 0; }
.root { height: 18px; padding-left: 4px; display: flex; align-items: center; background: #dcdcdc; border-bottom: 1px solid #9a9a9a; }
.root .i16 { margin-right: 2px; }
.root .opt { margin: 0 5px 0 auto; }
.tree { list-style: none; margin: 0; padding: 0; }
.tree li { display: flex; align-items: center; height: 16px; white-space: nowrap; }
.tree .i16 { margin-right: 2px; }
.ar { flex: none; width: 13px; }
.ar svg { width: 10px; height: 10px; }
.l0 { padding-left: 4px; } .l1 { padding-left: 18px; } .l2 { padding-left: 32px; } .l3 { padding-left: 46px; }
.tree .off { color: #5e5e5e; }
.sel { background: #8f8f8f; color: #fff; }
.proj { flex: 1; min-height: 0; display: flex; background: #c2c2c2; border: 1px solid #858585; border-top: 0; }
.side { width: 150px; padding-top: 2px; border-right: 1px solid #8b8b8b; }
.side .last { margin-bottom: 15px; }
.files { flex: 1; display: flex; flex-direction: column; }
.crumbs { height: 18px; padding: 1px 0 0 6px; display: flex; align-items: center; gap: 8px; background: #dedede; border-bottom: 1px solid #999; }
.file { display: flex; align-items: center; height: 18px; margin-top: 1px; padding-left: 17px; gap: 4px; }
.zoombar { margin-top: auto; height: 17px; display: flex; justify-content: flex-end; align-items: center; padding-right: 16px; background: #dedede; border-top: 1px solid #8b8b8b; }
.zoombar .range { width: 56px; }

/* inspector */
.insp { background: linear-gradient(#a2a2a2 16px, #c2c2c2 16px); }
.insp > :not(.tabs) { border-left: 1px solid #858585; }
.objhead { flex: none; height: 51px; padding: 5px 6px 0 4px; display: flex; background: linear-gradient(#d8d8d8, #e4e4e4); border: solid #858585; border-width: 1px 0; }
.cube { width: 24px; height: 24px; }
.objrows { flex: 1; min-width: 0; padding-top: 2px; }
.r1, .r2 { display: flex; align-items: center; height: 16px; }
.r2 { margin-top: 4px; gap: 5px; padding-left: 6px; }
.r1 { padding-left: 13px; gap: 5px; }
.r1 .name { flex: 1; }
.r2 .s { flex: 248 1 0; }
.r2 .tag { flex-grow: 260; }
.static { display: flex; gap: 4px; align-items: center; }
input[type=checkbox] { appearance: none; flex: none; width: 13px; height: 13px; border: 1px solid #777; border-radius: 2px; background: linear-gradient(#fafafa, #cfcfcf); }
input[type=checkbox]:checked { background: url("data:image/svg+xml,%3Csvg xmlns='http://www.w3.org/2000/svg' viewBox='0 0 11 11'%3E%3Cpath d='M2 5l2.500 4L9.500 1' fill='none' stroke='%23000' stroke-width='1.800'/%3E%3C/svg%3E") center / 11px no-repeat, linear-gradient(#c3d4ee, #7f9fcf); border-color: #4c5f80; }
.f { min-width: 0; height: 16px; padding: 0 3px; border: 1px solid #a0a0a0; border-top-color: #5e5e5e; background: #d4d4d4; }
.s { appearance: none; min-width: 0; height: 16px; padding: 0 5px; font-size: 10px; line-height: 14px; border: 1px solid #6a6a6a; border-radius: 3px; background: url("data:image/svg+xml,%3Csvg xmlns='http://www.w3.org/2000/svg' width='6' height='8'%3E%3Cpath d='M0 3h5L2.500 0zM0 5h5L2.500 8z' fill='%23222'/%3E%3C/svg%3E") no-repeat right 4px center, linear-gradient(#f0f0f0, #c6c6c6); }
.chead { flex: none; height: 18px; padding: 0 1px 0 2px; display: flex; align-items: center; }
.chead b { margin: 0 auto 0 18px; }
.chead input + b { margin-left: 2px; }
.chead input { margin-left: 3px; }
.chead .i14 { margin-left: 4px; }
.line { height: 19px; border-top: 1px solid #777; }
.rect { flex: none; display: flex; padding: 0 4px 0 0; }
.preset { position: relative; width: 251px; height: 64px; }
.preset button { position: absolute; left: 14px; top: 15px; width: 49px; height: 49px; border: 1px solid #8d8d8d; background: #d0d0d0; }
.ph { position: absolute; left: 21px; top: 0; font-size: 10px; }
.pv { position: absolute; left: 2px; top: 20px; writing-mode: vertical-rl; transform: rotate(180deg); font-size: 10px; line-height: 12px; }
.quad { flex: 1; display: grid; grid-template-columns: repeat(3, minmax(0, 1fr)); grid-auto-rows: 16px; column-gap: 2px; }
.quad label { padding-left: 1px; }
.quad .act { color: #1740d8; }
.quad .focus { border: 1px solid #3c5bd8; }
.rr { justify-self: end; width: 52px; height: 18px; margin-top: -2px; }
.row { flex: none; height: 18px; padding: 0 4px 0 14px; display: flex; align-items: center; }
.row.out { padding-left: 2px; margin-top: 1px; }
.pv-row { margin-bottom: 8px; }
.sc-row { margin-bottom: 2px; }
.lb { flex: none; width: 237px; }
.row.in { padding-left: 29px; }
.row.in .lb { width: 222px; }
.row .s, .row > .f, .swatch, .row .xyz { flex: 1; }
.short { height: 16px; }
.xyz { display: grid; grid-template-columns: repeat(3, minmax(0, 1fr)); column-gap: 2px; }
.xyz label { display: flex; padding-left: 1px; gap: 3px; }
.xyz input { flex: 1; }
.textblk { flex: none; padding: 0 4px 1px 13px; }
.textblk label { display: block; height: 16px; }
.textblk textarea { display: block; width: 100%; height: 42px; resize: none; padding: 0 2px; }
.obj { display: flex; align-items: center; gap: 3px; }
.obj input { flex: 1; min-width: 0; }
.pick { width: 8px; height: 8px; margin: 0 2px 0 8px; }
.swatch { height: 16px; background: #fff; border: 1px solid #5e5e5e; }
.drop { width: 14px; height: 14px; margin-left: 4px; }
.al { width: 60px; }
.al button { height: 14px; }
.al + .al { margin-left: 10px; }
.ray { margin-bottom: 6px; }
.mat { flex: none; height: 44px; display: flex; border-top: 1px solid #666; background: linear-gradient(#dcdcdc, #e0e0e0); }
.mar { width: 10px; height: 10px; margin: 30px 0 0 4px; }
.thumb { width: 32px; height: 32px; margin-top: 5px; background: #fff; }
.minfo { flex: 1; padding: 3px 3px 0 8px; }
.m1, .m2 { display: flex; align-items: center; height: 20px; font-size: 12px; }
.m1 span { flex: 1; }
.m1 .i14 { margin-left: 4px; }
.m2 { height: 17px; font-size: 11px; color: #777; gap: 9px; }
.m2 .s { flex: 1; height: 14px; line-height: 12px; }
.m2 .dim-s { opacity: 1; color: #777; border-color: #a5a5a5; background: url("data:image/svg+xml,%3Csvg xmlns='http://www.w3.org/2000/svg' width='6' height='4'%3E%3Cpath d='M0 0h6L3 4z' fill='%23777'/%3E%3C/svg%3E") no-repeat right 5px center, linear-gradient(#e4e4e4, #d2d2d2); }
.strip { flex: none; height: 6px; border: solid #8a8a8a; border-width: 1px 0; }
.add { flex: none; align-self: center; width: 230px; height: 23px; margin: 10px 4px 0 0; border: 1px solid #5c5c5c; border-radius: 3px; background: linear-gradient(#fbfbfb, #cdcdcd); font-size: 12px; }
.insp > .add { border-left: 1px solid #5c5c5c; }
.fill { flex: 1; }
.preview { flex: none; }
.phead { height: 18px; padding: 0 8px 0 3px; display: flex; align-items: center; gap: 5px; color: #fff; background: linear-gradient(#555, #717171 20%, #525252); border-top: 1px solid #4a4a4a; border-bottom: 1px solid #333; }
.phead b { border-left: 1px solid #444; padding-left: 3px; }
.grip { flex: 1; height: 6px; border: solid #b5b5b5; border-width: 1px 0; }
.pbody { height: 179px; padding: 23px 2px 0 0; display: flex; justify-content: center; background: #313131; box-shadow: inset 0 5px 5px #151515; border-bottom: 2px solid #555; }
.white { width: 133px; height: 133px; background: #fff; }
.status { flex: none; height: 22px; }

/* taskbar */
.task { --eye: #111; flex: none; height: 40px; padding-left: 1px; display: flex; align-items: center; background: #0e0f11; color: #fff; font: 12px/18px "Open Sans", "Noto Sans", sans-serif; }
.task button { width: 48px; height: 40px; margin-right: 1px; }
.task .run { border: solid transparent; border-width: 0 4px; background: linear-gradient(#b5555e, #b5555e) bottom / 40px 2px no-repeat; background-clip: padding-box; }
.task .cur { border: 0; background: linear-gradient(#b5555e, #b5555e) bottom / 48px 2px no-repeat, #3e3e3e; }
.dc { --eye: #7289da; }
.epic { font: bold 8px "Liberation Sans", sans-serif; fill: #fff; }
.epic.small { font-size: 5px; }
.tray { display: flex; gap: 8px; }
.tray svg { width: 16px; height: 16px; }
.lang { margin: 0 13px 0 9px; }
.clock { display: flex; flex-direction: column; align-items: center; margin-right: 18px; }
.note { margin-right: 16px; }
```
